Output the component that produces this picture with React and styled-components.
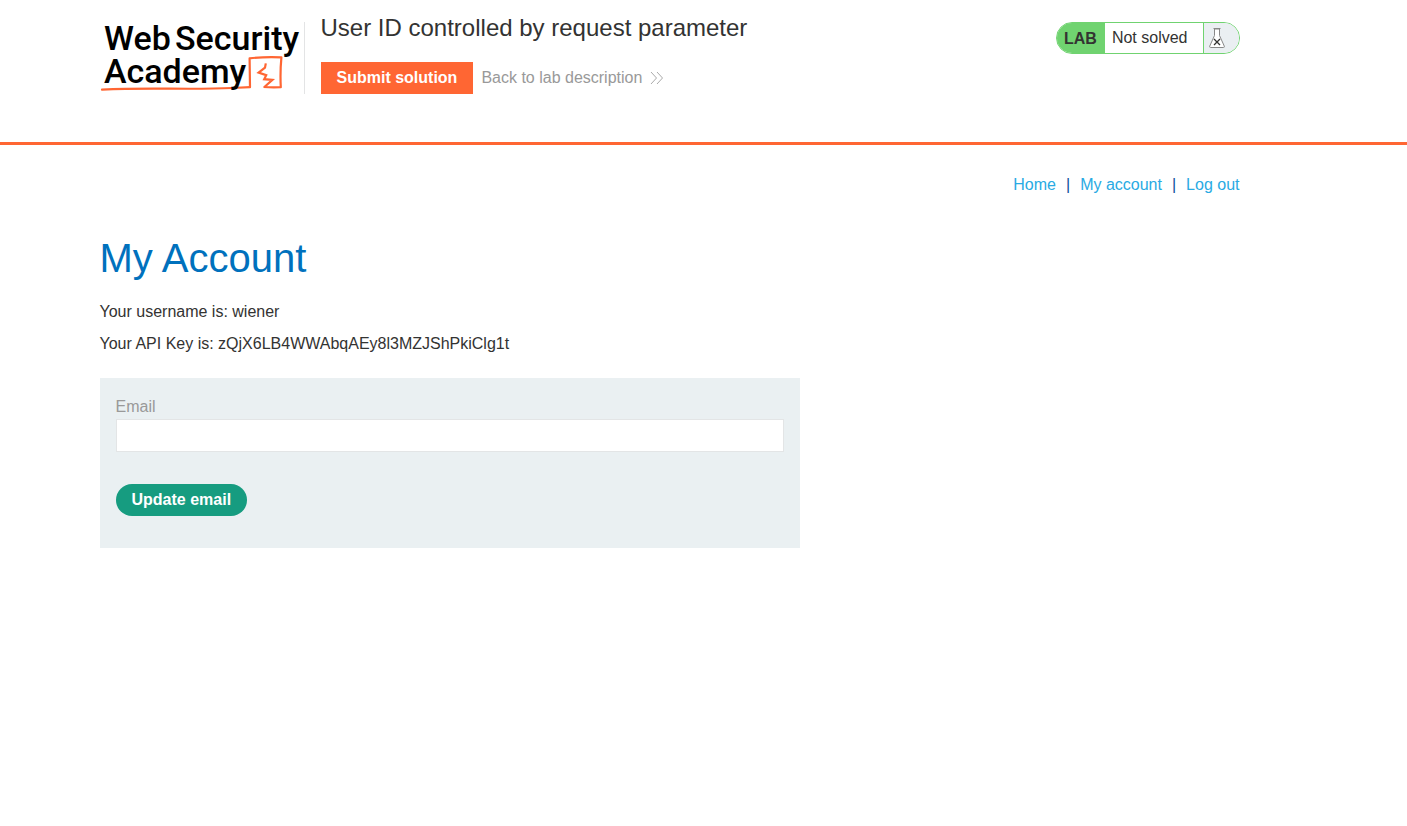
import React from "react";
import styled, { createGlobalStyle } from "styled-components";

const GlobalStyle = createGlobalStyle`
  *, *::before, *::after { box-sizing: border-box; }
  body {
    margin: 0;
    background: #fff;
    color: #333332;
    font-family: "Liberation Sans", Arial, sans-serif;
    font-size: 16px;
    line-height: 20px;
  }
  h1, h2, p { margin: 0; font-weight: 400; }
  a { text-decoration: none; }
`;

const Container = styled.div`
  max-width: 1208px;
  margin: 0 auto;
  padding-right: 68px;
`;

const Header = styled.header`
  padding: 14px 0 48px;
  border-bottom: 3px solid #ff6633;
`;

const HeaderRow = styled(Container)`
  display: flex;
  align-items: flex-start;
`;

const LogoLink = styled.a`
  flex: none;
  width: 205px;
  height: 72px;
  margin-top: 8px;
  border-right: 1px solid #e3e4e5;
`;

const LogoArt = styled.svg`
  display: block;
  overflow: visible;
  font-family: Roboto, sans-serif;
  font-size: 34px;
  font-weight: 500;
`;

const TitleBlock = styled.div`
  flex: 1;
  padding-left: 16px;
`;

const LabTitle = styled.h2`
  margin-bottom: 20px;
  font-size: 24px;
  line-height: 28px;
`;

const Actions = styled.div`
  display: flex;
  align-items: center;
  gap: 8px;
`;

const Button = styled.button`
  height: 32px;
  padding: 0 16px;
  border: 0;
  border-radius: ${(p) => (p.$round ? "16px" : "0")};
  background: ${(p) => (p.$round ? "#169c80" : "#ff6633")};
  color: #fff;
  font: inherit;
  font-weight: 700;
  cursor: pointer;
`;

const BackLink = styled.a`
  display: flex;
  align-items: center;
  gap: 8px;
  color: #999999;
`;

const Status = styled.div`
  display: flex;
  flex: none;
  height: 32px;
  margin-top: 8px;
  overflow: hidden;
  border: 1px solid #70d370;
  border-radius: 16px;
  line-height: 30px;
`;

const StatusTag = styled.span`
  padding: 1px 8px 0 7px;
  background: #70d370;
  font-weight: 700;
`;

const StatusText = styled.span`
  padding: 0 15px 0 7px;
`;

const StatusIcon = styled.span`
  display: flex;
  align-items: center;
  width: 36px;
  padding-left: 5px;
  border-left: 1px solid #70d370;
  background: #eaeff2;
`;

const Main = styled(Container).attrs({ as: "main" })`
  padding-top: 30px;
  padding-bottom: 32px;
`;

const Nav = styled.nav`
  display: flex;
  justify-content: flex-end;
  gap: 10px;
  margin-bottom: 40px;
  color: #0b5299;
`;

const NavLink = styled.a`
  color: #29aae3;
`;

const PageTitle = styled.h1`
  margin-bottom: 21px;
  color: #0071bd;
  font-size: 40px;
  line-height: 46px;
`;

const Detail = styled.p`
  margin-bottom: 12px;
`;

const Form = styled.form`
  max-width: 700px;
  margin-top: 24px;
  padding: 19px 16px 32px;
  background: #eaf0f2;
`;

const Label = styled.label`
  display: block;
  margin-bottom: 2px;
  color: #999999;
`;

const Input = styled.input`
  display: block;
  width: 100%;
  height: 33px;
  margin-bottom: 32px;
  padding: 0 8px;
  border: 1px solid #e3e5e6;
  background: #fff;
  font: inherit;
`;

function Logo() {
  return (
    <LogoArt width="204" height="72" viewBox="0 0 204 72">
      <path
        d="M2 67.6Q28 66.4 70 66.7T132 66L150 65.2"
        fill="none"
        stroke="#ff6633"
        strokeWidth="2.2"
        strokeLinecap="round"
      />
      <path
        d="M150 65.2L149.6 36.4Q165 34.6 181.4 35.4Q180 50 180.8 65.2Q172 65.6 163.5 65"
        fill="none"
        stroke="#ff6633"
        strokeWidth="2.2"
        strokeLinejoin="round"
      />
      <path
        d="M165.8 41.4L165 45.6L158.6 50.6L166.2 53.2L164.2 57.2L172.4 57.8L164.4 65"
        fill="none"
        stroke="#ff6633"
        strokeWidth="2.2"
      />
      <text x="4" y="28">Web</text>
      <text x="75" y="28">Security</text>
      <text x="4" y="61">Academy</text>
    </LogoArt>
  );
}

function Chevrons() {
  return (
    <svg width="14" height="14" viewBox="0 0 14 14" fill="none" stroke="#aaaaaa" aria-hidden="true">
      <path d="M1 1L6.5 7L1 13M7 1L12.5 7L7 13" />
    </svg>
  );
}

function Flask() {
  return (
    <svg width="16" height="22" viewBox="0 0 16 22" aria-hidden="true">
      <path d="M5.5 2V8.5L.7 19.2Q.4 20.5 1.5 20.5H14.5Q15.6 20.5 15.3 19.2L10.5 8.5V2Z" fill="#fff" stroke="#888888" />
      <path d="M4.5 1.5H11.5" stroke="#888888" />
      <path d="M5 12L11 18M11 12L5 18" stroke="#333332" strokeWidth="1.3" />
    </svg>
  );
}

export default function App() {
  return (
    <>
      <GlobalStyle />
      <Header>
        <HeaderRow>
          <LogoLink href="#" aria-label="Web Security Academy">
            <Logo />
          </LogoLink>
          <TitleBlock>
            <LabTitle>User ID controlled by request parameter</LabTitle>
            <Actions>
              <Button type="button">Submit solution</Button>
              <BackLink href="#">
                Back to lab description
                <Chevrons />
              </BackLink>
            </Actions>
          </TitleBlock>
          <Status>
            <StatusTag>LAB</StatusTag>
            <StatusText>Not solved</StatusText>
            <StatusIcon>
              <Flask />
            </StatusIcon>
          </Status>
        </HeaderRow>
      </Header>
      <Main>
        <Nav>
          <NavLink href="#">Home</NavLink>
          <span>|</span>
          <NavLink href="#">My account</NavLink>
          <span>|</span>
          <NavLink href="#">Log out</NavLink>
        </Nav>
        <PageTitle>My Account</PageTitle>
        <Detail>Your username is: wiener</Detail>
        <Detail>Your API Key is: zQjX6LB4WWAbqAEy8l3MZJShPkiClg1t</Detail>
        <Form onSubmit={(e) => e.preventDefault()}>
          <Label htmlFor="email">Email</Label>
          <Input id="email" type="email" name="email" />
          <Button $round type="submit">
            Update email
          </Button>
        </Form>
      </Main>
    </>
  );
}
